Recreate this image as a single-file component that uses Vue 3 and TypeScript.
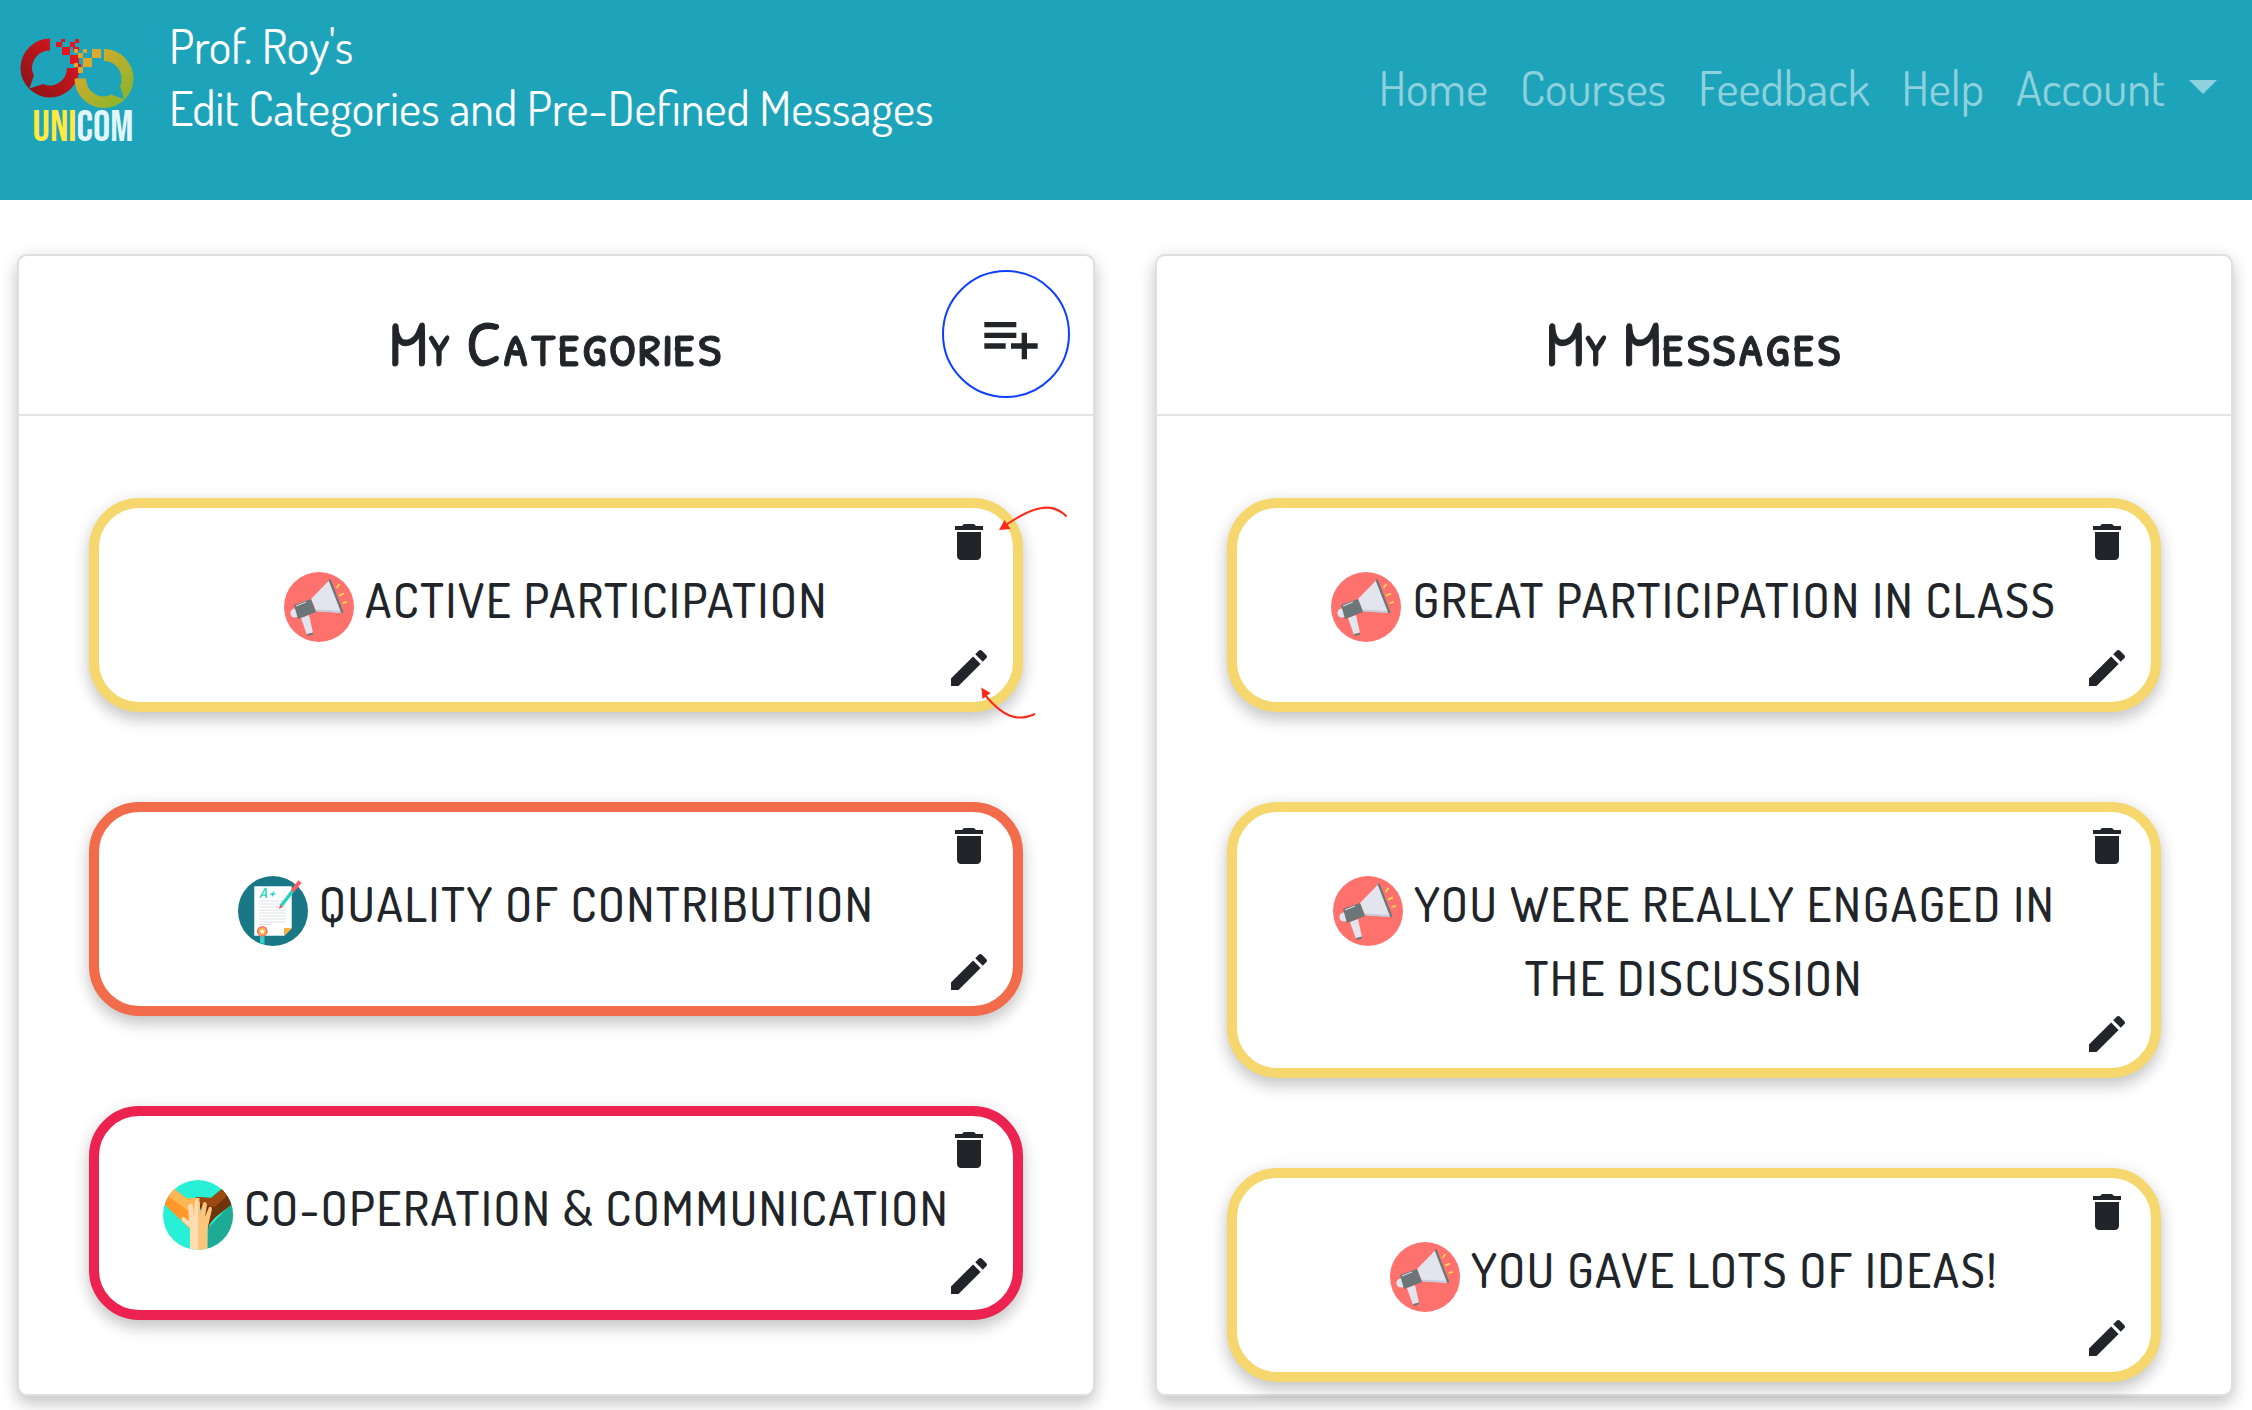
<script setup lang="ts">
type IconName = 'megaphone' | 'paper' | 'hands'

interface Item {
  label: string
  icon: IconName
  tone: 'yellow' | 'orange' | 'red'
  annotated?: boolean
}

interface Panel {
  id: string
  title: string
  canAdd: boolean
  items: Item[]
}

const links: string[] = ['Home', 'Courses', 'Feedback', 'Help']

const panels: Panel[] = [
  {
    id: 'categories',
    title: 'My Categories',
    canAdd: true,
    items: [
      { label: 'ACTIVE PARTICIPATION', icon: 'megaphone', tone: 'yellow', annotated: true },
      { label: 'QUALITY OF CONTRIBUTION', icon: 'paper', tone: 'orange' },
      { label: 'CO-OPERATION & COMMUNICATION', icon: 'hands', tone: 'red' },
    ],
  },
  {
    id: 'messages',
    title: 'My Messages',
    canAdd: false,
    items: [
      { label: 'GREAT PARTICIPATION IN CLASS', icon: 'megaphone', tone: 'yellow' },
      { label: 'YOU WERE REALLY ENGAGED IN THE DISCUSSION', icon: 'megaphone', tone: 'yellow' },
      { label: 'YOU GAVE LOTS OF IDEAS!', icon: 'megaphone', tone: 'yellow' },
    ],
  },
]
</script>

<template>
  <div class="page">
    <header class="topbar">
      <a class="brand" href="#" aria-label="Unicom">
        <svg class="logo" viewBox="0 0 120 124" width="120" height="124">
          <defs>
            <linearGradient id="redRing" x1="0" y1="1" x2="1" y2="0">
              <stop offset="0.1" stop-color="#8a1418" />
              <stop offset="0.9" stop-color="#e3151f" />
            </linearGradient>
            <linearGradient id="greenRing" x1="0" y1="0" x2="1" y2="1">
              <stop offset="0.15" stop-color="#dca92c" />
              <stop offset="0.85" stop-color="#8db52c" />
            </linearGradient>
          </defs>
          <path fill="url(#redRing)" d="M31 0.500A29.500 29.500 0 1 0 60.500 30H48A17.500 17.500 0 0 1 31 47.500Q28 47.500 24 46L10.500 50.500L15 37Q13 34 13 30A17.800 17.800 0 0 1 31 12.500Z" />
          <path fill="url(#greenRing)" d="M85 11A29.500 29.500 0 1 1 55.500 40.500H67A18 18 0 0 0 85 58.500Q89 58.500 92 56.500L105 61L101 48Q103 45 102.500 40A17.500 17.500 0 0 0 85 23Z" />
          <g fill="#e3151f">
            <path d="M37 4h6v5h-6zM42 1h4v3h-4zM43 9h8v8h-8zM51 4h5v5h-5zM56 1h4v4h-4zM54 9h6v4h-6zM51 17h9v9h-9zM57 26h5v6h-5z" />
          </g>
          <g fill="#dca92c">
            <path d="M73 11h9v9h-9zM59 15h5v5h-5zM64 20h9v9h-9zM64 11h4v4h-4zM55 11h4v4h-4zM59 29h5v6h-5zM55 25h4v4h-4z" />
          </g>
          <text class="wordmark" x="64" y="103" text-anchor="middle"><tspan fill="#ffe843">UNI</tspan><tspan fill="#e2f6fa">COM</tspan></text>
        </svg>
      </a>
      <h1 class="heading">Prof. Roy's<br />Edit Categories and Pre-Defined Messages</h1>
      <nav class="nav" aria-label="Main">
        <a v-for="link in links" :key="link" class="nav-item" href="#">{{ link }}</a>
        <button class="nav-item" type="button" aria-haspopup="true">Account<span class="caret"></span></button>
      </nav>
    </header>

    <main class="panels">
      <section v-for="panel in panels" :key="panel.id" class="panel" :aria-labelledby="panel.id">
        <div class="panel-head">
          <h2 :id="panel.id" class="panel-title">{{ panel.title }}</h2>
          <button v-if="panel.canAdd" class="add" type="button" aria-label="Add category">
            <svg viewBox="0 0 24 24" width="64" height="64" fill="currentColor">
              <path d="M14 10H2v2h12v-2zm0-4H2v2h12V6zm4 8v-4h-2v4h-4v2h4v4h2v-4h4v-2h-4zM2 16h8v-2H2v2z" />
            </svg>
          </button>
        </div>

        <ul class="list">
          <li v-for="item in panel.items" :key="item.label" class="card" :class="item.tone">
            <p class="label">
              <svg v-if="item.icon === 'megaphone'" class="badge" viewBox="0 0 70 70" width="70" height="70" aria-hidden="true">
                <circle cx="35" cy="35" r="35" fill="#ff716c" />
                <circle cx="11" cy="41" r="4.600" fill="#e2e5ed" />
                <path d="M17 46L25 43L29 61L23 63Z" fill="#e2e5ed" />
                <path d="M23 62L29 60.500V62.500L23.500 64Z" fill="#6c7678" />
                <path d="M45.500 8L27 27L32 39L58 41Z" fill="#e2e5ed" />
                <path d="M31 37.500L57 39L58.500 41L32 39.500Z" fill="#c5cad4" />
                <path d="M10 33L27 27L32 40L14 47Z" fill="#6c7678" />
                <path d="M12 34L22 30" stroke="#e2e5ed" stroke-width="1" />
                <path d="M45.500 7.500L58.500 41" stroke="#6c7678" stroke-width="2.200" />
                <path d="M55.500 12L52.500 16M60 21.500L55 23.500M63 30L58.500 31" stroke="#ffe04f" stroke-width="1.500" />
              </svg>
              <svg v-else-if="item.icon === 'paper'" class="badge" viewBox="0 0 70 70" width="70" height="70" aria-hidden="true">
                <circle cx="35" cy="35" r="35" fill="#1a7886" />
                <path d="M16.500 10.500H53.500V52L46 59.500H16.500Z" fill="#fff" stroke="#b9dfe4" />
                <path d="M46 52H54L46 60Z" fill="#fbb03b" />
                <path d="M21 25H48M21 28H48M21 31H48M21 34H48M21 37H48M21 40H48M21 43H48M21 46H48M21 48.500H33" stroke="#dfe1e3" stroke-width="1" />
                <text class="grade" x="21" y="22">A+</text>
                <path d="M22 58H26.500V69L24.300 67L22 68.500Z" fill="#33cfc4" />
                <circle cx="24.300" cy="55.300" r="5.400" fill="#f2727c" />
                <circle cx="24.300" cy="55.300" r="3.900" fill="#fbb03b" />
                <path d="M24.300 52.600L25.100 54.500L27.100 54.600L25.500 55.900L26 57.900L24.300 56.800L22.600 57.900L23.100 55.900L21.500 54.600L23.500 54.500Z" fill="#fff" />
                <path d="M43 30L55 14.500" stroke="#2ad0c0" stroke-width="3.500" />
                <path d="M54.500 15L62 5.500" stroke="#ff5b62" stroke-width="4" />
                <path d="M41 33L42 28.500L45 31Z" fill="#ff5b62" />
              </svg>
              <svg v-else class="badge" viewBox="0 0 70 70" width="70" height="70" aria-hidden="true">
                <clipPath id="round"><circle cx="35" cy="35" r="35" /></clipPath>
                <g clip-path="url(#round)">
                  <rect width="70" height="70" fill="#28f0d6" />
                  <path d="M45 48L70 22V70H44Z" fill="#1eab96" />
                  <path d="M60 8L48 18L33 17L45 49Q46 43 54 36L72 22Z" fill="#6f340c" />
                  <path d="M60 8L48 18L33 17L38 24L52 27L66 14Z" fill="#9b4a14" />
                  <path d="M10 8L23 18H36L28 50L0 23Z" fill="#ff9828" />
                  <path d="M10 8L23 18H37L32 32L24 30L5 16Z" fill="#ffb655" />
                  <path d="M27 70V48L19 41Q17 37 21 37L26 41L25 26Q27 21 30 26L31 36L32 21Q34 17 35.500 19V70Z" fill="#fddcb0" />
                  <path d="M35 70V19Q37 20 37 24V34L40 23Q43 20 44 25L42 37L46 27Q49 26 49 29L46 42L44.500 49V70Z" fill="#fcc57c" />
                </g>
              </svg>
              {{ item.label }}
            </p>
            <button class="tool delete" type="button" :aria-label="'Delete ' + item.label">
              <svg viewBox="0 0 24 24" width="48" height="48" fill="currentColor">
                <path d="M6 19c0 1.100.9 2 2 2h8c1.100 0 2-.9 2-2V7H6v12zM19 4h-3.500l-1-1h-5l-1 1H5v2h14V4z" />
              </svg>
            </button>
            <button class="tool edit" type="button" :aria-label="'Edit ' + item.label">
              <svg viewBox="0 0 24 24" width="48" height="48" fill="currentColor">
                <path d="M3 17.250V21h3.750L17.810 9.940l-3.750-3.750L3 17.250zM20.710 7.040c.39-.39.39-1.020 0-1.410l-2.340-2.340c-.39-.39-1.020-.39-1.410 0l-1.830 1.830 3.750 3.750 1.830-1.830z" />
              </svg>
            </button>
            <svg v-if="item.annotated" class="arrows" viewBox="0 0 100 230" width="100" height="230" aria-hidden="true">
              <g fill="none" stroke="#fb2b1b" stroke-width="2">
                <path d="M96.500 18.500C82 3 62 9 36 27" />
                <path d="M65 216C47 224 33 219 15 197" />
              </g>
              <path d="M29 32L34.500 22L40.500 31ZM11.300 189.500L12.500 201L20.500 195Z" fill="#fb2b1b" />
            </svg>
          </li>
        </ul>
      </section>
    </main>
  </div>
</template>

<style>
body {
  margin: 0;
  background: #fff;
}
</style>

<style scoped>
.page {
  color: #212529;
  font-family: Dosis, Lato, sans-serif;
}

.topbar {
  display: flex;
  align-items: flex-start;
  height: 200px;
  padding: 14px 19px 0;
  box-sizing: border-box;
  background: #1da4bb;
}

.brand {
  margin-top: 24px;
  margin-right: 30px;
}

.logo {
  display: block;
}

.wordmark {
  font-family: "Bebas Neue", Dosis, Lato, sans-serif;
  font-size: 43px;
}

.grade {
  font-size: 14px;
  font-style: italic;
  font-weight: 600;
  fill: #2ad0c0;
}

.heading {
  flex: 1;
  margin: 0;
  color: #fff;
  font-size: 48px;
  font-weight: 400;
  line-height: 62px;
}

.nav {
  display: flex;
  padding-top: 42px;
}

.nav-item {
  display: flex;
  align-items: center;
  padding: 0 16px;
  border: 0;
  background: none;
  color: rgba(255, 255, 255, 0.5);
  font: inherit;
  font-size: 48px;
  line-height: 62px;
  text-decoration: none;
}

.caret {
  margin-left: 24px;
  border-top: 14px solid;
  border-right: 14px solid transparent;
  border-left: 14px solid transparent;
}

.panels {
  display: grid;
  grid-template-columns: 1fr 1fr;
  gap: 60px;
  padding: 54px 19px 14px 17px;
}

.panel {
  border: 2px solid #dfdfdf;
  border-radius: 10px;
  background: #fff;
  box-shadow: 0 8px 16px rgba(0, 0, 0, 0.2), 0 0 20px rgba(0, 0, 0, 0.06);
}

.panel-head {
  position: relative;
  display: flex;
  align-items: center;
  justify-content: center;
  height: 158px;
  border-bottom: 2px solid #e3e3e3;
}

.panel-title {
  margin: 16px 0 0;
  font-family: "Patrick Hand SC", Dosis, Lato, sans-serif;
  font-size: 64px;
  font-weight: 500;
  line-height: 68px;
  -webkit-text-stroke: 1px currentColor;
}

.add {
  position: absolute;
  top: 14px;
  right: 23px;
  display: flex;
  align-items: center;
  justify-content: center;
  width: 128px;
  height: 128px;
  padding: 8px 0 0 10px;
  border: 2px solid #1040ff;
  border-radius: 50%;
  background: none;
  color: inherit;
}

.list {
  display: flex;
  flex-direction: column;
  gap: 90px;
  margin: 0;
  padding: 82px 70px 12px;
  list-style: none;
}

.card {
  position: relative;
  padding: 60px;
  border: 10px solid;
  border-radius: 50px;
  background: #fff;
  box-shadow: 0 8px 16px rgba(0, 0, 0, 0.2), 0 0 20px rgba(0, 0, 0, 0.06);
}

.yellow {
  border-color: #f5d76e;
}

.orange {
  border-color: #f26b4b;
}

.red {
  border-color: #ec2350;
}

.label {
  margin: 0;
  font-size: 48px;
  font-weight: 500;
  line-height: 62px;
  letter-spacing: 0.035em;
  text-align: center;
}

.badge {
  vertical-align: -24px;
}

.tool {
  position: absolute;
  right: 20px;
  padding: 0;
  border: 0;
  background: none;
  color: inherit;
  line-height: 0;
}

.delete {
  top: 10px;
}

.edit {
  bottom: 10px;
}

.arrows {
  position: absolute;
  top: -10px;
  right: -57px;
  pointer-events: none;
}
</style>
